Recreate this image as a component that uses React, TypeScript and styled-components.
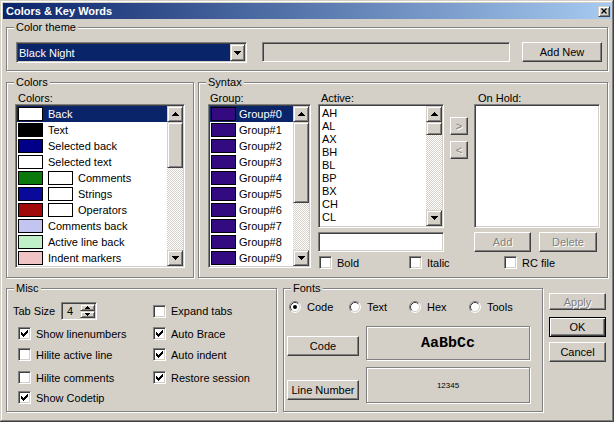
import React from 'react'
import styled, { createGlobalStyle, css } from 'styled-components'

const face = '#d4d0c8'
const light = '#ffffff'
const shade = '#808080'
const dark = '#404040'
const navy = '#0a246a'

const GlobalStyle = createGlobalStyle`
  * { box-sizing: border-box; }
  html, body { margin: 0; padding: 0; background: ${face}; }
  body {
    font-family: "Liberation Sans", Arial, sans-serif;
    font-size: 11px;
    color: #000;
  }
`

// 2px sunken edge: the border is the outer line, the inset shadow the inner one
const sunken = css`
  border: 1px solid;
  border-color: ${shade} ${light} ${light} ${shade};
  padding: 1px;
  box-shadow: inset 1px 1px 0 ${dark}, inset -1px -1px 0 ${face};
`

const raised = css`
  border: 1px solid;
  border-color: ${light} ${dark} ${dark} ${light};
  box-shadow: inset -1px -1px 0 ${shade};
  background: ${face};
`

const raisedSoft = css`
  border: 1px solid;
  border-color: ${face} ${dark} ${dark} ${face};
  box-shadow: inset 1px 1px 0 ${light}, inset -1px -1px 0 ${shade};
  background: ${face};
`

const etched = css`
  border: 1px solid ${shade};
  box-shadow: inset 1px 1px 0 ${light}, 1px 1px 0 ${light};
`

const Window = styled.div`
  width: 614px;
  height: 422px;
  padding: 3px;
  background: ${face};
  box-shadow: inset -1px -1px 0 ${dark}, inset 1px 1px 0 ${face},
    inset -2px -2px 0 ${shade}, inset 2px 2px 0 ${light};
  display: flex;
  flex-direction: column;
  overflow: hidden;
`

const TitleBar = styled.div`
  height: 16px;
  flex: none;
  display: flex;
  align-items: center;
  justify-content: space-between;
  padding: 0 1px 0 3px;
  background: linear-gradient(90deg, ${navy}, #a6caf0);
`

const Title = styled.span`
  color: #fff;
  font-weight: bold;
  line-height: 16px;
`

const CloseBox = styled.span`
  width: 12px;
  height: 11px;
  ${raisedSoft};
  display: flex;
  align-items: center;
  justify-content: center;
`

const Body = styled.div`
  display: flex;
  flex-direction: column;
  padding: 2px 3px 0 3px;
`

const Row = styled.div<{ $mt?: number }>`
  display: flex;
  align-items: flex-start;
  margin-top: ${p => p.$mt ?? 0}px;
`

const Group = styled.fieldset<{ $w?: number; $ml?: number }>`
  margin: 0 0 0 ${p => p.$ml ?? 0}px;
  padding: 0;
  min-width: 0;
  width: ${p => (p.$w ? `${p.$w}px` : 'auto')};
  flex: none;
  ${etched};
`

const Legend = styled.legend`
  margin-left: 7px;
  padding: 0 2px;
  height: 13px;
  line-height: 13px;
  background: ${face};
`

const Pane = styled.div<{ $pad: string }>`
  display: flex;
  padding: ${p => p.$pad};
`

const Stack = styled.div<{ $pad?: string }>`
  display: flex;
  flex-direction: column;
  padding: ${p => p.$pad ?? '0'};
`

const Column = styled.div<{ $w?: number; $ml?: number; $pt?: number; $gap?: number }>`
  display: flex;
  flex-direction: column;
  flex: none;
  width: ${p => (p.$w ? `${p.$w}px` : 'auto')};
  margin-left: ${p => p.$ml ?? 0}px;
  padding-top: ${p => p.$pt ?? 0}px;
  gap: ${p => p.$gap ?? 0}px;
`

const FieldLabel = styled.div<{ $indent?: number }>`
  height: 11px;
  line-height: 11px;
  margin-left: ${p => p.$indent ?? 0}px;
  white-space: nowrap;
`

/* combo, edit fields, buttons */

const Combo = styled.div`
  width: 231px;
  height: 21px;
  ${sunken};
  background: ${navy};
  display: flex;
  align-items: center;
`

const ComboText = styled.span`
  flex: 1;
  color: #fff;
  padding-left: 1px;
  white-space: nowrap;
`

const DropButton = styled.span`
  width: 15px;
  height: 17px;
  ${raisedSoft};
  display: flex;
  align-items: center;
  justify-content: center;
`

const EditField = styled.div<{ $w: number; $h?: number; $ml?: number; $mt?: number; $white?: boolean }>`
  width: ${p => p.$w}px;
  height: ${p => p.$h ?? 20}px;
  margin: ${p => p.$mt ?? 0}px 0 0 ${p => p.$ml ?? 0}px;
  flex: none;
  ${sunken};
  background: ${p => (p.$white ? '#fff' : face)};
`

const Button = styled.button<{ $w?: number; $h?: number; $mt?: number; $ml?: number; $default?: boolean }>`
  width: ${p => (p.$w ? `${p.$w}px` : '100%')};
  height: ${p => p.$h ?? 20}px;
  margin: ${p => p.$mt ?? 0}px 0 0 ${p => p.$ml ?? 0}px;
  flex: none;
  padding: 0;
  font: inherit;
  color: #000;
  white-space: nowrap;
  ${raised};

  &:disabled {
    color: ${shade};
    text-shadow: 1px 1px 0 ${light};
  }

  ${p =>
    p.$default &&
    css`
      border: 1px solid #000;
      box-shadow: inset 1px 1px 0 ${light}, inset -1px -1px 0 ${dark}, inset -2px -2px 0 ${shade};
    `}
`

/* list boxes */

const ListBox = styled.div<{ $w: number; $h: number }>`
  width: ${p => p.$w}px;
  height: ${p => p.$h}px;
  flex: none;
  ${sunken};
  background: #fff;
  display: flex;
`

const ListItems = styled.div<{ $pt?: number }>`
  flex: 1;
  min-width: 0;
  overflow: hidden;
  padding-top: ${p => p.$pt ?? 0}px;
`

const SwatchRow = styled.div<{ $selected?: boolean }>`
  height: 16px;
  display: flex;
  align-items: center;
  padding-left: 1px;
  white-space: nowrap;
  background: ${p => (p.$selected ? navy : 'transparent')};
  color: ${p => (p.$selected ? '#fff' : '#000')};
`

const Swatch = styled.span<{ $color: string; $gap: number }>`
  width: 25px;
  height: 14px;
  flex: none;
  border: 1px solid #000;
  background: ${p => p.$color};
  margin-right: ${p => p.$gap}px;
`

const TextRow = styled.div`
  height: 13px;
  line-height: 13px;
  padding-left: 2px;
`

const ScrollBar = styled.div`
  width: 16px;
  flex: none;
  display: flex;
  flex-direction: column;
`

const ScrollButton = styled.div`
  height: 16px;
  flex: none;
  ${raisedSoft};
  display: flex;
  align-items: center;
  justify-content: center;
`

const ScrollTrack = styled.div`
  flex: 1;
  display: flex;
  flex-direction: column;
  background-color: #fff;
  background-image: repeating-conic-gradient(${face} 0 25%, #fff 0 50%);
  background-size: 2px 2px;
`

const ScrollThumb = styled.div<{ $h: number }>`
  height: ${p => p.$h}px;
  flex: none;
  ${raisedSoft};
`

/* check boxes, radios, spinner */

const CheckItem = styled.label<{ $w?: number; $ml?: number }>`
  display: flex;
  align-items: center;
  gap: 5px;
  height: 13px;
  flex: none;
  width: ${p => (p.$w ? `${p.$w}px` : 'auto')};
  margin-left: ${p => p.$ml ?? 0}px;
  white-space: nowrap;
`

const CheckBox = styled.span`
  width: 13px;
  height: 13px;
  flex: none;
  ${sunken};
  background: #fff;
  display: flex;
  align-items: center;
  justify-content: center;
`

const MiscRow = styled.div<{ $mt: number; $h?: number }>`
  display: flex;
  align-items: center;
  height: ${p => p.$h ?? 13}px;
  margin-top: ${p => p.$mt}px;
`

const MiscCell = styled.div`
  width: 140px;
  flex: none;
  display: flex;
  align-items: center;
`

const TabLabel = styled.span`
  width: 48px;
  flex: none;
`

const Spinner = styled.div`
  width: 36px;
  height: 18px;
  ${sunken};
  background: ${face};
  display: flex;
`

const SpinValue = styled.span`
  flex: 1;
  padding-left: 4px;
  line-height: 14px;
`

const SpinButtons = styled.div`
  width: 15px;
  display: flex;
  flex-direction: column;
`

const SpinButton = styled.div`
  flex: 1;
  ${raisedSoft};
  display: flex;
  align-items: center;
  justify-content: center;
`

const RadioRow = styled.div`
  display: flex;
  height: 12px;
  margin: 6px 0 0 5px;
`

const RadioItem = styled.label`
  width: 60px;
  display: flex;
  align-items: center;
  gap: 6px;
`

const PreviewGrid = styled.div`
  display: grid;
  grid-template-columns: 72px 164px;
  grid-template-rows: 34px 36px;
  column-gap: 7px;
  row-gap: 7px;
  margin: 13px 0 8px 3px;
`

const PreviewBox = styled.div<{ $kind: 'code' | 'number' }>`
  ${etched};
  display: flex;
  align-items: center;
  justify-content: center;
  ${p =>
    p.$kind === 'code'
      ? css`
          font-family: "Liberation Mono", "Courier New", monospace;
          font-size: 15px;
          font-weight: bold;
        `
      : css`
          font-size: 8px;
        `}
`

const FontButton = styled(Button)<{ $mb: number }>`
  align-self: end;
  margin-bottom: ${p => p.$mb}px;
`

const SideButtons = styled.div`
  width: 57px;
  flex: none;
  display: flex;
  flex-direction: column;
  margin: 11px 0 0 6px;
`

/* drawings */

const Tri = ({ w, down }: { w: number; down?: boolean }) => {
  const rows = (w + 1) / 2
  let d = ''
  for (let i = 0; i < rows; i++) {
    const y = down ? rows - 1 - i : i
    d += `M${rows - 1 - i} ${y}h${2 * i + 1}v1h-${2 * i + 1}z`
  }
  return (
    <svg width={w} height={rows} viewBox={`0 0 ${w} ${rows}`} shapeRendering="crispEdges">
      <path d={d} fill="#000" />
    </svg>
  )
}

const Tick = () => (
  <svg width="7" height="7" viewBox="0 0 7 7" shapeRendering="crispEdges">
    <path
      d="M0 2h1v3H0zM1 3h1v3H1zM2 4h1v3H2zM3 3h1v3H3zM4 2h1v3H4zM5 1h1v3H5zM6 0h1v3H6z"
      fill="#000"
    />
  </svg>
)

const RadioDot = ({ on }: { on?: boolean }) => (
  <svg width="12" height="12" viewBox="0 0 12 12">
    <circle cx="6" cy="6" r="5" fill="#fff" />
    <path d="M2.11 9.89A5.5 5.5 0 0 1 9.89 2.11" fill="none" stroke={shade} />
    <path d="M9.89 2.11A5.5 5.5 0 0 1 2.11 9.89" fill="none" stroke={light} />
    <path d="M2.82 9.18A4.5 4.5 0 0 1 9.18 2.82" fill="none" stroke={dark} />
    <path d="M9.18 2.82A4.5 4.5 0 0 1 2.82 9.18" fill="none" stroke={face} />
    {on && <circle cx="6" cy="6" r="2" fill="#000" />}
  </svg>
)

const CloseGlyph = () => (
  <svg width="6" height="6" viewBox="0 0 6 6">
    <path d="M0.5 0.5L5.5 5.5M5.5 0.5L0.5 5.5" stroke="#000" strokeWidth="1.3" />
  </svg>
)

/* pieces */

const Check = ({ label, checked, w, ml }: { label: string; checked?: boolean; w?: number; ml?: number }) => (
  <CheckItem $w={w} $ml={ml}>
    <CheckBox>{checked && <Tick />}</CheckBox>
    {label}
  </CheckItem>
)

const Scroll = ({ thumb }: { thumb: number }) => (
  <ScrollBar>
    <ScrollButton>
      <Tri w={7} />
    </ScrollButton>
    <ScrollTrack>
      <ScrollThumb $h={thumb} />
    </ScrollTrack>
    <ScrollButton>
      <Tri w={7} down />
    </ScrollButton>
  </ScrollBar>
)

type ColorItem = { label: string; color: string; extra?: string }

const colorItems: ColorItem[] = [
  { label: 'Back', color: '#ffffff' },
  { label: 'Text', color: '#000000' },
  { label: 'Selected back', color: '#000088' },
  { label: 'Selected text', color: '#ffffff' },
  { label: 'Comments', color: '#0a780a', extra: '#ffffff' },
  { label: 'Strings', color: '#0a0a9a', extra: '#ffffff' },
  { label: 'Operators', color: '#a00a0a', extra: '#ffffff' },
  { label: 'Comments back', color: '#c4c4f0' },
  { label: 'Active line back', color: '#c0f0c8' },
  { label: 'Indent markers', color: '#f0c4c4' },
]

const groups = Array.from({ length: 10 }, (_, i) => `Group#${i}`)
const registers = ['AH', 'AL', 'AX', 'BH', 'BL', 'BP', 'BX', 'CH', 'CL', 'CR0']

export default function App() {
  return (
    <>
      <GlobalStyle />
      <Window>
        <TitleBar>
          <Title>Colors &amp; Key Words</Title>
          <CloseBox>
            <CloseGlyph />
          </CloseBox>
        </TitleBar>

        <Body>
          <Group>
            <Legend>Color theme</Legend>
            <Pane $pad="8px 0 7px 9px">
              <Combo>
                <ComboText>Black Night</ComboText>
                <DropButton>
                  <Tri w={7} down />
                </DropButton>
              </Combo>
              <EditField $w={248} $ml={15} />
              <Button $w={80} $ml={12}>
                Add New
              </Button>
            </Pane>
          </Group>

          <Row $mt={5}>
            <Group $w={188}>
              <Legend>Colors</Legend>
              <Stack $pad="4px 0 9px 8px">
                <FieldLabel $indent={3}>Colors:</FieldLabel>
                <ListBox $w={170} $h={164}>
                  <ListItems>
                    {colorItems.map((c, i) => (
                      <SwatchRow key={c.label} $selected={i === 0}>
                        <Swatch $color={c.color} $gap={5} />
                        {c.extra && <Swatch $color={c.extra} $gap={5} />}
                        {c.label}
                      </SwatchRow>
                    ))}
                  </ListItems>
                  <Scroll thumb={46} />
                </ListBox>
              </Stack>
            </Group>

            <Group $w={410} $ml={4}>
              <Legend>Syntax</Legend>
              <Pane $pad="4px 0 8px 9px">
                <Column $w={103}>
                  <FieldLabel $indent={2}>Group:</FieldLabel>
                  <ListBox $w={103} $h={164}>
                    <ListItems>
                      {groups.map((g, i) => (
                        <SwatchRow key={g} $selected={i === 0}>
                          <Swatch $color="#340a80" $gap={3} />
                          {g}
                        </SwatchRow>
                      ))}
                    </ListItems>
                    <Scroll thumb={81} />
                  </ListBox>
                </Column>

                <Column $w={126} $ml={7}>
                  <FieldLabel $indent={3}>Active:</FieldLabel>
                  <ListBox $w={126} $h={124}>
                    <ListItems $pt={1}>
                      {registers.map(r => (
                        <TextRow key={r}>{r}</TextRow>
                      ))}
                    </ListItems>
                    <Scroll thumb={13} />
                  </ListBox>
                  <EditField $w={126} $mt={4} $white />
                  <Row $mt={4}>
                    <Check label="Bold" w={90} ml={1} />
                    <Check label="Italic" />
                  </Row>
                </Column>

                <Column $w={18} $ml={6} $pt={24} $gap={6}>
                  <Button $w={18} $h={18} disabled>
                    &gt;
                  </Button>
                  <Button $w={18} $h={18} disabled>
                    &lt;
                  </Button>
                </Column>

                <Column $w={126} $ml={6}>
                  <FieldLabel $indent={4}>On Hold:</FieldLabel>
                  <ListBox $w={126} $h={124} />
                  <Row $mt={4}>
                    <Button $w={57} disabled>
                      Add
                    </Button>
                    <Button $w={58} $ml={8} disabled>
                      Delete
                    </Button>
                  </Row>
                  <Row $mt={4}>
                    <Check label="RC file" ml={30} />
                  </Row>
                </Column>
              </Pane>
            </Group>
          </Row>

          <Row $mt={4}>
            <Group $w={271}>
              <Legend>Misc</Legend>
              <Stack $pad="0 0 7px 6px">
                <MiscRow $mt={7} $h={18}>
                  <MiscCell>
                    <TabLabel>Tab Size</TabLabel>
                    <Spinner>
                      <SpinValue>4</SpinValue>
                      <SpinButtons>
                        <SpinButton>
                          <Tri w={5} />
                        </SpinButton>
                        <SpinButton>
                          <Tri w={5} down />
                        </SpinButton>
                      </SpinButtons>
                    </Spinner>
                  </MiscCell>
                  <Check label="Expand tabs" />
                </MiscRow>
                <MiscRow $mt={7}>
                  <MiscCell>
                    <Check label="Show linenumbers" checked ml={5} />
                  </MiscCell>
                  <Check label="Auto Brace" checked />
                </MiscRow>
                <MiscRow $mt={8}>
                  <MiscCell>
                    <Check label="Hilite active line" ml={5} />
                  </MiscCell>
                  <Check label="Auto indent" checked />
                </MiscRow>
                <MiscRow $mt={10}>
                  <MiscCell>
                    <Check label="Hilite comments" ml={5} />
                  </MiscCell>
                  <Check label="Restore session" checked />
                </MiscRow>
                <MiscRow $mt={7}>
                  <MiscCell>
                    <Check label="Show Codetip" checked ml={5} />
                  </MiscCell>
                </MiscRow>
              </Stack>
            </Group>

            <Group $w={260} $ml={6}>
              <Legend>Fonts</Legend>
              <Stack>
                <RadioRow>
                  {['Code', 'Text', 'Hex', 'Tools'].map((r, i) => (
                    <RadioItem key={r}>
                      <RadioDot on={i === 0} />
                      {r}
                    </RadioItem>
                  ))}
                </RadioRow>
                <PreviewGrid>
                  <FontButton $mb={4}>Code</FontButton>
                  <PreviewBox $kind="code">AaBbCc</PreviewBox>
                  <FontButton $mb={3}>Line Number</FontButton>
                  <PreviewBox $kind="number">12345</PreviewBox>
                </PreviewGrid>
              </Stack>
            </Group>

            <SideButtons>
              <Button $h={17} disabled>
                Apply
              </Button>
              <Button $mt={7} $default>
                OK
              </Button>
              <Button $mt={5}>Cancel</Button>
            </SideButtons>
          </Row>
        </Body>
      </Window>
    </>
  )
}
